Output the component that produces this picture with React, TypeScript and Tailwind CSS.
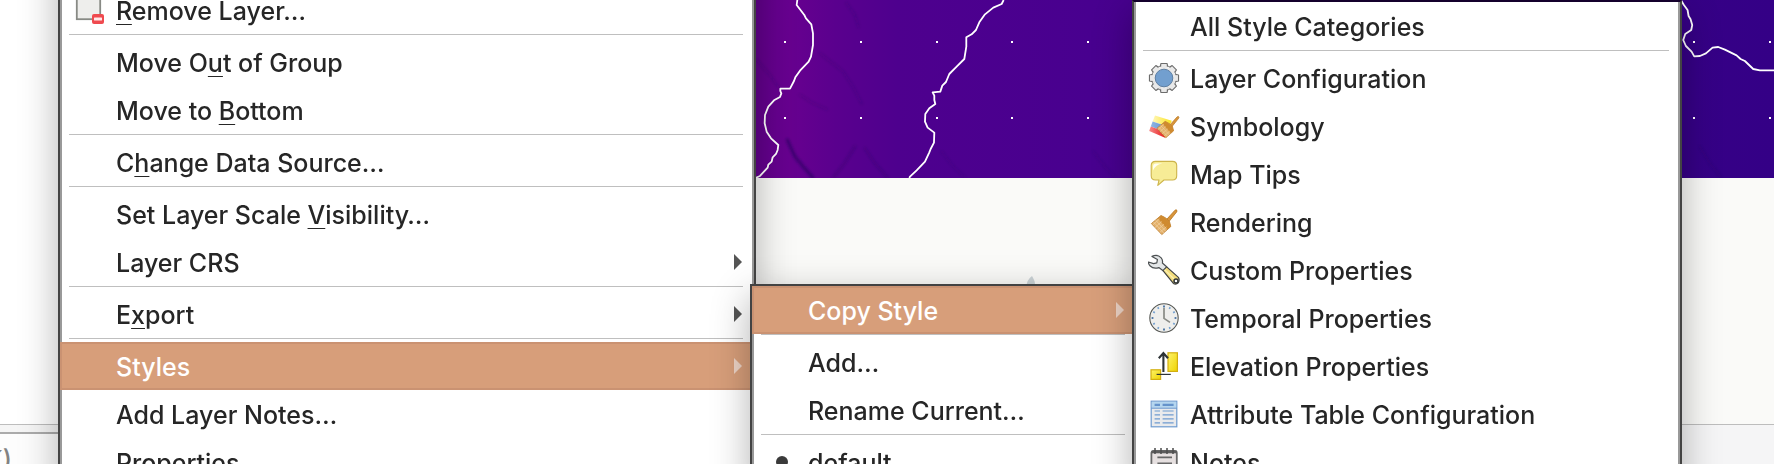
import type { ReactNode } from "react";

function Svg({ children }: { children: ReactNode }) {
  return (
    <svg viewBox="0 0 32 32" className="size-8 shrink-0" aria-hidden="true">
      {children}
    </svg>
  );
}

const eighths = [0, 45, 90, 135, 180, 225, 270, 315];
const hours = [0, 30, 60, 90, 120, 150, 180, 210, 240, 270, 300, 330];

function RemoveLayerIcon() {
  return (
    <Svg>
      <rect x="2.8" y="2" width="23.4" height="23.2" fill="#eeeeec" stroke="#888a85" strokeWidth="1.8" />
      <rect x="18" y="20" width="12" height="10" rx="2" fill="#ef4a4f" />
      <rect x="20" y="23.5" width="8" height="3" rx="0.5" fill="#ffe9e9" />
    </Svg>
  );
}

function GearIcon() {
  return (
    <Svg>
      <defs>
        <linearGradient id="gear" x1="0" y1="0" x2="0" y2="1">
          <stop offset="0" stopColor="#f3f3f3" />
          <stop offset="1" stopColor="#d9d9d9" />
        </linearGradient>
      </defs>
      {eighths.map((a) => (
        <path key={a} d="M12 6 L13 1.5 H19 L20 6 Z" fill="#e6e6e6" stroke="#6c6c6c" strokeWidth="1.2" strokeLinejoin="round" transform={`rotate(${a} 16 16)`} />
      ))}
      <circle cx="16" cy="16" r="12.4" fill="url(#gear)" stroke="#6c6c6c" strokeWidth="0.9" />
      {eighths.map((a) => (
        <path key={a} d="M12.8 7 L13.6 2.2 H18.4 L19.2 7 Z" fill="#e9e9e9" transform={`rotate(${a} 16 16)`} />
      ))}
      <circle cx="16" cy="16" r="8.8" fill="#729fcf" stroke="#5e7fa3" strokeWidth="1" />
    </Svg>
  );
}

function Brush() {
  return (
    <>
      <path d="M19 13 L27 4.2 Q28.8 3 29 5 L28.6 6 L21 15.5 Z" fill="#d9953a" stroke="#b5721c" strokeWidth="0.8" />
      <path d="M13 9.5 L16 11 L18.5 12.5 L21.5 15.5 L22.8 20.5 L13.8 28.6 L3.4 17.6 Z" fill="#e3b069" stroke="#b97a2b" strokeWidth="0.8" strokeLinejoin="round" />
      <path d="M13 9.5 L16 11 L21.5 15.5 L22.8 20.5 L19.6 23.4 L10 12.4 Z" fill="#cf8a2f" />
      <path d="M5.5 16 L15.8 27 M7.6 14.2 L17.7 25.2 M4.6 19.2 L11.6 12.8 M7 21.6 L13.6 15.6 M9.4 24 L16 18.2 M11.8 26.4 L18.4 20.8" stroke="#f0d0a0" strokeWidth="0.7" />
    </>
  );
}

function SymbologyIcon() {
  return (
    <Svg>
      <defs>
        <linearGradient id="sy" x1="0" x2="1"><stop offset="0" stopColor="#fff6b8" /><stop offset="1" stopColor="#fbe41c" /></linearGradient>
        <linearGradient id="sb" x1="0" x2="1"><stop offset="0" stopColor="#8fb6e4" /><stop offset="1" stopColor="#5686c8" /></linearGradient>
        <linearGradient id="sr" x1="0" x2="1"><stop offset="0" stopColor="#f58a8a" /><stop offset="1" stopColor="#e81010" /></linearGradient>
      </defs>
      <path d="M7 5.5 L23.8 10.8 L21 17 L4.6 11.4 Z" fill="url(#sy)" />
      <path d="M4.6 11.4 L21 17 L18.5 22.5 L2.8 16.4 Z" fill="url(#sb)" />
      <path d="M2.8 16.4 L18.5 22.5 L17 27.8 L1.2 21 Z" fill="url(#sr)" />
      <g transform="translate(6 3.2) scale(0.86)">
        <Brush />
      </g>
    </Svg>
  );
}

function MapTipsIcon() {
  return (
    <Svg>
      <path d="M7.5 3.4 H24.5 Q28.7 3.4 28.7 7.6 V17.8 Q28.7 22 24.5 22 H16 L9.8 27.4 L11 22 H7.5 Q3.2 22 3.2 17.8 V7.6 Q3.2 3.4 7.5 3.4 Z" fill="#f7ec96" stroke="#cdb44a" strokeWidth="1.1" strokeLinejoin="round" />
      <path d="M5 12.5 V8.5 Q5 5.4 8.2 5.4 H14.5 Q7.5 6.4 5 12.5 Z" fill="#fffef2" />
    </Svg>
  );
}

function RenderingIcon() {
  return (
    <Svg>
      <Brush />
    </Svg>
  );
}

function WrenchIcon() {
  return (
    <Svg>
      <path d="M14.8 16.4 L18.4 12.6 L30.4 23.4 Q32 26.4 30.2 28.8 Q28 31 25.4 29.4 Z" fill="#f2dc7c" stroke="#3f4244" strokeWidth="1.2" strokeLinejoin="round" />
      <path d="M15.6 14.8 L27.4 26.2" stroke="#fbf0b4" strokeWidth="1.2" />
      <path d="M4 2.4 Q9.5 0 13.2 3.8 Q15 6 14.4 9 L18.6 12.8 L14.8 16.6 L10.8 13.6 Q5.6 15.4 2.2 12 Q0.4 10.4 0.4 8 L5.6 9.6 L8.8 8.8 L9.4 5.6 Z" fill="#e4e7e8" stroke="#4c5052" strokeWidth="1.2" strokeLinejoin="round" />
      <circle cx="28" cy="27" r="2" fill="#fff" stroke="#2e3436" strokeWidth="1.5" />
    </Svg>
  );
}

function ClockIcon() {
  return (
    <Svg>
      <circle cx="16" cy="16" r="14.2" fill="#eeeeec" stroke="#555753" strokeWidth="1.1" />
      {hours.map((a) => (
        <path key={a} d="M16 3.6 V5.4" stroke={a % 90 === 0 ? "#2f5f98" : "#729fcf"} strokeWidth="1.6" transform={`rotate(${a} 16 16)`} />
      ))}
      <path d="M16 6 V16.4 L22 20.4" fill="none" stroke="#888a85" strokeWidth="1.7" />
    </Svg>
  );
}

function ElevationIcon() {
  return (
    <Svg>
      <defs>
        <linearGradient id="el" x1="0" y1="0" x2="1" y2="1">
          <stop offset="0" stopColor="#fdf26a" />
          <stop offset="1" stopColor="#efd400" />
        </linearGradient>
      </defs>
      <rect x="20" y="2.8" width="9.4" height="18.6" fill="url(#el)" stroke="#d3ae10" strokeWidth="1.2" />
      <rect x="3" y="19.8" width="9.6" height="9.6" fill="url(#el)" stroke="#d3ae10" strokeWidth="1.2" />
      <path d="M8.6 24.4 H22.8" stroke="#2e3436" strokeWidth="1.2" />
      <path d="M15.4 22 V3.4 M10.8 8.2 L15.4 3 L20 8.2" fill="none" stroke="#2e3436" strokeWidth="2.1" />
    </Svg>
  );
}

function TableIcon() {
  return (
    <Svg>
      <rect x="3.2" y="3.2" width="25.6" height="25.6" fill="#e9eaec" stroke="#6f9bd0" strokeWidth="1.2" />
      <rect x="3.8" y="3.8" width="24.4" height="6" fill="#b5d6ef" />
      <path d="M3 10.2 H29" stroke="#6f9bd0" strokeWidth="1.1" />
      <path d="M6.6 6.8 H12 M14.6 6.8 H25.6" stroke="#6593cb" strokeWidth="2.2" />
      <path d="M6.6 13 H12 M14.6 13 H25.6 M6.6 16.8 H12 M14.6 16.8 H25.6 M6.6 20.8 H12 M14.6 20.8 H25.6 M6.6 24.8 H12 M14.6 24.8 H25.6" stroke="#6f9bd0" strokeWidth="1.2" />
    </Svg>
  );
}

function NotesIcon() {
  return (
    <Svg>
      <rect x="3.4" y="5" width="25.4" height="25.6" rx="2" fill="#e6e0e0" stroke="#686868" strokeWidth="1.8" />
      <path d="M3.4 6 H28.8" stroke="#5c5c5c" strokeWidth="2.6" />
      <path d="M7 2 V8 M13 2 V8 M19 2 V8 M25 2 V8" stroke="#4c4c4c" strokeWidth="1.5" />
      <path d="M9.4 11.4 H24 M9.4 17.4 H24 M9.4 23.4 H24" stroke="#666" strokeWidth="1.7" />
    </Svg>
  );
}

function Bullet() {
  return (
    <Svg>
      <circle cx="16" cy="16" r="6" fill="#3a3a3a" />
    </Svg>
  );
}

function Label({ text }: { text: string }) {
  const at = text.indexOf("&");
  if (at < 0) return <span className="pt-0.5">{text}</span>;
  return (
    <span className="pt-0.5">
      {text.slice(0, at)}
      <span className="underline decoration-1 underline-offset-4 [text-decoration-skip-ink:none]">{text[at + 1]}</span>
      {text.slice(at + 2)}
    </span>
  );
}

function Item({ text, icon, submenu, active }: { text: string; icon?: ReactNode; submenu?: boolean; active?: boolean }) {
  return (
    <button
      type="button"
      role="menuitem"
      aria-haspopup={submenu ? "menu" : undefined}
      className={
        active
          ? "-mx-0.5 flex h-12 items-center border-2 border-[#ca9272] bg-[#d79e7a] pr-2.5 pl-3 text-left whitespace-nowrap text-white"
          : "flex h-12 items-center pr-2.5 pl-3 text-left whitespace-nowrap text-[#262626]"
      }
    >
      <span className="mr-2.5 flex w-8 shrink-0">{icon}</span>
      <Label text={text} />
      {submenu && (
        <svg viewBox="0 0 8 16" className="ml-auto h-4 w-2 shrink-0" aria-hidden="true">
          <path d="M0 0 L8 8 L0 16 Z" fill={active ? "#ecd3c5" : "#555555"} />
        </svg>
      )}
    </button>
  );
}

function Separator() {
  return <div role="separator" className="mr-[9px] mb-[3px] ml-[7px] h-px shrink-0 bg-[#bfbfbf]" />;
}

function Menu({ label, place, children }: { label: string; place: string; children: ReactNode }) {
  return (
    <div className={`absolute border-2 border-[#434343] bg-white shadow-[0_12px_36px_rgba(0,0,0,0.3)] ${place}`}>
      <div role="menu" aria-label={label} className="flex flex-col border-x-2 border-[#999999]">
        {children}
      </div>
    </div>
  );
}

const dots = [785, 861, 937, 1012, 1088, 1694, 1770];

function RasterMap() {
  return (
    <svg viewBox="754 0 1020 178" preserveAspectRatio="xMinYMin slice" className="h-[178px] w-full shrink-0" role="img" aria-label="Map canvas">
      <defs>
        <linearGradient id="heat" x1="0" x2="1">
          <stop offset="0" stopColor="#62008c" />
          <stop offset="0.035" stopColor="#67008f" />
          <stop offset="0.08" stopColor="#5a008e" />
          <stop offset="0.14" stopColor="#4e008e" />
          <stop offset="0.33" stopColor="#48008f" />
          <stop offset="0.7" stopColor="#3b0088" />
          <stop offset="1" stopColor="#340086" />
        </linearGradient>
        <filter id="soft" x="-20%" y="-20%" width="140%" height="140%">
          <feGaussianBlur stdDeviation="3" />
        </filter>
      </defs>
      <rect x="754" width="1020" height="178" fill="url(#heat)" />
      <g transform="translate(700 0) scale(0.3333)" fill="none" stroke="#2a0060" strokeLinecap="round" filter="url(#soft)">
        <path d="M262 420 L285 470 L310 500 L338 532" strokeWidth="10" opacity="0.6" />
        <path d="M400 532 L432 492 L465 440" strokeWidth="8" opacity="0.25" />
        <path d="M495 445 L525 490 L562 532" strokeWidth="8" opacity="0.22" />
        <path d="M170 180 L210 225 L235 262 M300 285 L340 310 L380 328 M360 160 L430 215 L460 262 L485 310 M440 10 L465 45 L475 80" strokeWidth="8" opacity="0.14" />
        <path d="M725 455 L760 500 L795 532 M1180 455 L1215 500 L1245 532" strokeWidth="7" opacity="0.14" />
        <path d="M3000 440 L3030 490 L3062 530" strokeWidth="7" opacity="0.18" />
      </g>
      <g transform="translate(700 0) scale(0.3333)" fill="none" stroke="#ffffff" strokeWidth="5.4" strokeLinejoin="round">
        <path d="M292 0 L290 15 L313 45 L318 55 L334 73 L339 100 L339 135 L333 170 L326 185 L300 212 L286 232 L282 243 L270 266 L241 266 L241 273 L244 280 L240 291 L222 301 L205 320 L195 345 L194 370 L200 395 L213 415 L235 435 L233 450 L228 462 L218 472 L215 485 L205 494 L203 503 L180 528 L166 534" />
        <path d="M911 0 L905 12 L880 23 L855 43 L838 67 L828 90 L815 103 L799 112 L799 140 L793 177 L770 200 L748 222 L738 246 L727 257 L721 275 L698 277 L703 287 L703 300 L706 312 L688 325 L676 342 L675 365 L683 383 L703 398 L702 428 L692 447 L688 457 L675 485 L650 511 L630 530 L628 534" />
        <path d="M2943 0 L2952 15 L2963 30 L2966 48 L2972 58 L2977 75 L2974 90 L2956 102 L2950 120 L2958 138 L2975 155 L2983 169 L3000 168 L3018 160 L3038 143 L3055 141 L3075 149 L3110 166 L3122 177 L3135 183 L3160 207 L3180 211 L3224 211" />
      </g>
      {dots.map((x) => (
        <g key={x} fill="#ffffff">
          <rect x={x - 1} y="41" width="2" height="2" />
          <rect x={x - 1} y="117" width="2" height="2" />
        </g>
      ))}
    </svg>
  );
}

export default function App() {
  return (
    <main className="relative flex h-screen overflow-hidden bg-[#fafaf8] font-[Inter,'Liberation_Sans',sans-serif] text-[25px] leading-8 font-[450]">
      <section className="flex w-[754px] shrink-0 flex-col bg-white" aria-label="Layers">
        <div className="h-[424px] shrink-0" />
        <div className="h-2 shrink-0 border-t border-[#bdbdbd] bg-[#f5f5f5]" />
        <div className="flex flex-1 border-t-2 border-[#ababab] bg-[#fdfdfd]">
          <span className="mt-2.5 flex w-3 justify-end whitespace-nowrap text-[#828282]">K)</span>
        </div>
      </section>
      <section className="flex min-w-0 flex-1 flex-col" aria-label="Map">
        <RasterMap />
        <div className="relative h-[246px] shrink-0 bg-[#fafaf8]">
          <svg viewBox="0 0 12 12" className="absolute bottom-[136px] left-[272px] size-3" aria-hidden="true">
            <path d="M0 12 Q1 3 6 0 Q9 5 9 8 L12 12 Z" fill="#cbd3d6" />
          </svg>
        </div>
        <div className="flex-1 border-t border-[#bdbdbd] bg-[#f5f5f6]" />
      </section>

      <Menu label="Layer" place="top-[-64px] left-[58px] w-[698px]">
        <div className="h-12" />
        <Item text="&Remove Layer…" icon={<RemoveLayerIcon />} />
        <Separator />
        <Item text="Move O&ut of Group" />
        <Item text="Move to &Bottom" />
        <Separator />
        <Item text="C&hange Data Source…" />
        <Separator />
        <Item text="Set Layer Scale &Visibility…" />
        <Item text="Layer CRS" submenu />
        <Separator />
        <Item text="E&xport" submenu />
        <Separator />
        <Item text="Styles" submenu active />
        <Item text="Add Layer Notes…" />
        <Item text="Properties…" />
      </Menu>

      <Menu label="Styles" place="top-[284px] left-[750px] w-[388px]">
        <Item text="Copy Style" submenu active />
        <Separator />
        <Item text="Add…" />
        <Item text="Rename Current…" />
        <Separator />
        <Item text="default" icon={<Bullet />} />
      </Menu>

      <Menu label="Copy Style" place="top-0 left-[1132px] w-[550px] border-t-[#14002c]">
        <Item text="All Style Categories" />
        <Separator />
        <Item text="Layer Configuration" icon={<GearIcon />} />
        <Item text="Symbology" icon={<SymbologyIcon />} />
        <Item text="Map Tips" icon={<MapTipsIcon />} />
        <Item text="Rendering" icon={<RenderingIcon />} />
        <Item text="Custom Properties" icon={<WrenchIcon />} />
        <Item text="Temporal Properties" icon={<ClockIcon />} />
        <Item text="Elevation Properties" icon={<ElevationIcon />} />
        <Item text="Attribute Table Configuration" icon={<TableIcon />} />
        <Item text="Notes" icon={<NotesIcon />} />
      </Menu>
    </main>
  );
}
